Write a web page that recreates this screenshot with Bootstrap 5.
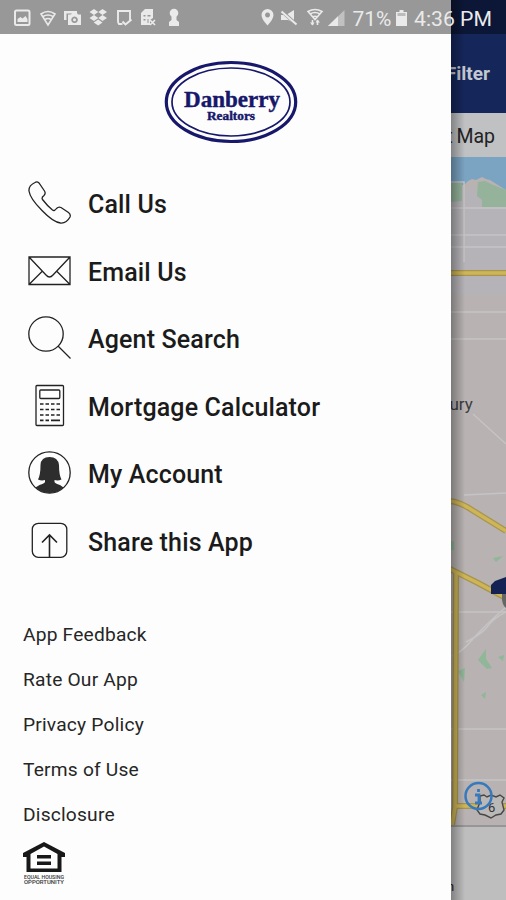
<!DOCTYPE html>
<html lang="en">
<head>
<meta charset="utf-8">
<meta name="viewport" content="width=device-width, initial-scale=1">
<title>Danberry Realtors</title>
<link rel="stylesheet" href="https://cdn.jsdelivr.net/npm/bootstrap@5.3.0/dist/css/bootstrap.min.css">
<style>
body{font-family:Roboto,"Liberation Sans",sans-serif;color:#1b1b1b;background:#fdfdfd}
svg{display:block;flex:none}
.screen{width:506px;height:900px}
.app-head{height:113px;padding:36px 16px 0 0;background:#15265a;color:#c4c8d2;font-size:19px;font-weight:700}
.map-tabs{height:44px;padding:3px 11px 0 0;background:#bfc1c3;color:#222;font-size:19.5px;word-spacing:-1px}
.map-foot{height:75px;background:#bebebe;border-top:2px solid #969696}
.shade{width:14px;left:451px;background:linear-gradient(90deg,rgba(0,0,0,.32),rgba(0,0,0,0))}
.drawer{width:451px;background:#fdfdfd;padding-top:60px}
.logo{margin-left:164px;margin-bottom:26px}
.menu-row{height:67.5px;padding-left:28px;gap:17px;font-size:25px;font-weight:500;letter-spacing:.15px;color:#1b1b1b}
.menu-row span{padding-top:2px}
.menu-row svg{margin-bottom:2px}
.links{padding:38px 0 0 23px}
.links a{height:45px;font-size:19.2px;letter-spacing:.2px;color:#262626}
.status{height:34px;background:rgba(0,0,0,.4)}
.stroke-art{fill:none;stroke:#222;stroke-width:1.3}
</style>
<script src="https://cdn.jsdelivr.net/npm/bootstrap@5.3.0/dist/js/bootstrap.bundle.min.js"></script>
</head>
<body>
<div class="screen position-relative overflow-hidden">
  <main class="d-flex flex-column h-100">
    <header class="app-head d-flex align-items-center justify-content-end"><span>Filter</span></header>
    <div class="map-tabs d-flex align-items-center justify-content-end">List Map</div>
    <svg class="ms-auto" width="56" height="668" viewBox="450 157 56 668">
      <path fill="#b8b2b2" d="M450 157h56v668h-56z"/>
      <path fill="#b5b3b7" d="M450 190h56v105h-56z"/>
      <path fill="#7ba4c3" d="M450 157h56v33l-8-5-8-5-4-1-4-2-6 3-4-1-4 2-4 4h-14z"/>
      <path fill="#95b39a" d="M450 183h12v18l-12 1zM478 182l7-1 8 4 13 5v17h-24v-7l-5-4z"/>
      <g fill="none" stroke="#c5c3c5" stroke-width="1.500">
        <path d="M450 182h14v80M450 208h56M450 235h56M450 247h56M450 312h56M450 339h56M473 414l33 30M464 495l42-2M450 612h56M450 729h56M450 780h56"/>
        <path stroke-width="1.500" d="M452 656q10-4 20-16t34-33M466 642q16-8 22-16t18-14"/>
      </g>
      <path fill="#8fb798" d="M478 660l8-11v10l6 9-5 1zM498 657l6-2-1 6zM458 671l7-3-1 14zM481 695l5-3-1 7zM493 558l10-2-7 6zM450 541h4v9h-4z"/>
      <g fill="none" stroke="#a8954e" stroke-width="6"><path d="M450 273h56M450 501q10 1 22 9l34 21M450 569l28 14 28 15M456 572l-1 235-3 18M454 806h52"/></g>
      <g fill="none" stroke="#cdb558" stroke-width="3.500"><path d="M450 273h56M450 501q10 1 22 9l34 21M450 569l28 14 28 15M456 572l-1 235-3 18M454 806h52"/></g>
      <path fill="#142354" d="M491 585l4-4 11-4v17h-15z"/>
      <path fill="#666" d="M502 594h4v14q-3-2-4-8z"/>
      <text x="449.500" y="410" font-size="17" fill="#3c3e42">ury</text>
      <path d="M480 796l4-1 3 2 4-2 5 2 4-2 4 3-2 4 2 8-3 4-5 1-5 3-6-3-5-1-3-4 3-8z" fill="#bbb9b7" stroke="#474747" stroke-width="1.400"/>
      <text x="488" y="812" font-size="13" fill="#333">6</text>
      <circle cx="478.500" cy="796" r="13" fill="none" stroke="#3679bd" stroke-width="2.500"/>
      <path d="M478.500 789v3M475 795h4v8M475 803h7" fill="none" stroke="#3679bd" stroke-width="2.800"/>
    </svg>
    <footer class="map-foot flex-shrink-0"><svg class="ms-auto" width="60" height="73" viewBox="446 827 60 73"><text x="447" y="891" font-size="13" fill="#222">n</text></svg></footer>
  </main>

  <div class="shade position-absolute top-0 h-100"></div>

  <aside class="drawer position-absolute top-0 start-0 h-100">
    <svg class="logo" width="134" height="84" viewBox="0 0 134 84">
      <g fill="none" stroke="#17176b"><ellipse cx="67" cy="42" rx="64.700" ry="39.500" stroke-width="3.200"/><ellipse cx="67" cy="42" rx="59" ry="34" stroke-width="1.700"/></g>
      <g fill="#17176b" stroke="#17176b" stroke-width=".4" font-family="Liberation Serif,serif" font-weight="700"><text x="20" y="47" font-size="23" textLength="96" lengthAdjust="spacingAndGlyphs">Danberry</text><text x="43" y="60" font-size="11.500" textLength="48" lengthAdjust="spacingAndGlyphs">Realtors</text></g>
    </svg>
    <nav class="d-flex flex-column">
      <a class="menu-row d-flex align-items-center text-decoration-none" href="#">
        <svg class="stroke-art" width="43" height="43" viewBox="0 0 43 43"><path d="M7 1.500Q9 .2 11 2L16.500 10Q18 12.500 16 14.500Q13.200 16.500 14.500 18.500Q19 24.500 24.500 29Q26.500 30.500 28.500 27.500Q30.500 25.500 33 26.500L40.500 31.500Q43 33.500 42 36Q38.500 42.500 32.500 42Q25 41 14 29.500Q2 17.500 1 10Q.5 4.500 7 1.500Z"/></svg>
        <span>Call Us</span></a>
      <a class="menu-row d-flex align-items-center text-decoration-none" href="#">
        <svg class="stroke-art" width="43" height="43" viewBox="0 0 43 43"><path d="M1 8h41v27.500H1zM1 8l17 18q3.500 4 7 0L42 8M1 35.500L14.500 22M42 35.500L28.500 22"/></svg>
        <span>Email Us</span></a>
      <a class="menu-row d-flex align-items-center text-decoration-none" href="#">
        <svg class="stroke-art" width="43" height="43" viewBox="0 0 43 43"><circle cx="18" cy="18" r="17.200"/><path d="M30 30l12.500 12.500"/></svg>
        <span>Agent Search</span></a>
      <a class="menu-row d-flex align-items-center text-decoration-none" href="#">
        <svg class="stroke-art" width="43" height="43" viewBox="0 0 43 43"><rect x="8" y="1.500" width="27.500" height="40" rx="1"/><rect x="11.800" y="6" width="20" height="8.500" rx="1"/><path d="M12 20h20M12 25.500h20M12 31h20" stroke-width="1.700" stroke-dasharray="3.500 2"/><path d="M12 36.300h3.500M17.500 36.300h3.500M23 36.300h9" stroke-width="1.700"/></svg>
        <span>Mortgage Calculator</span></a>
      <a class="menu-row d-flex align-items-center text-decoration-none" href="#">
        <svg class="stroke-art" width="43" height="43" viewBox="0 0 43 43"><circle cx="21.500" cy="21.500" r="20.700"/><path fill="#2d2d2d" stroke="none" d="M12.500 14Q13 6 21.500 6T31 14Q31 24 33.500 28.500Q30 30 26.500 29V31Q27 32.500 32 34L35.500 36.500Q29.500 42 21.500 42T7.500 36.500L11.500 34Q16.500 32.500 17 31V29Q13.500 30 10 28.500Q12.500 24 12.500 14Z"/></svg>
        <span>My Account</span></a>
      <a class="menu-row d-flex align-items-center text-decoration-none" href="#">
        <svg class="stroke-art" width="43" height="43" viewBox="0 0 43 43"><rect x="4.300" y="4.300" width="34.500" height="34" rx="6"/><path stroke-width="1.600" d="M21.500 38V16M14 23.500l7.500-7.500 7.500 7.500"/></svg>
        <span>Share this App</span></a>
    </nav>
    <div class="links d-flex flex-column">
      <a class="d-flex align-items-center text-decoration-none" href="#">App Feedback</a>
      <a class="d-flex align-items-center text-decoration-none" href="#">Rate Our App</a>
      <a class="d-flex align-items-center text-decoration-none" href="#">Privacy Policy</a>
      <a class="d-flex align-items-center text-decoration-none" href="#">Terms of Use</a>
      <a class="d-flex align-items-center text-decoration-none" href="#">Disclosure</a>
      <svg class="mt-1" width="42" height="44" viewBox="0 0 42 44"><path fill="#181818" fill-rule="evenodd" d="M21 0L42 11v4h-3.500v15h-35V15H0v-4zM21 4.500L7.500 12v14.500h27V12z"/><path fill="#181818" d="M14 13h14v3.500H14zM14 19.500h14V23H14z"/><g fill="#333" font-size="4.800" font-weight="500"><text x="1" y="36.500" textLength="40" lengthAdjust="spacingAndGlyphs">EQUAL HOUSING</text><text x="1" y="42" textLength="40" lengthAdjust="spacingAndGlyphs">OPPORTUNITY</text></g></svg>
    </div>
  </aside>

  <div class="status position-absolute top-0 start-0 w-100">
    <svg width="506" height="34" viewBox="0 0 506 34" fill="#eaeaea">
      <rect x="15" y="10.500" width="14.500" height="14.500" rx="1.500" fill="none" stroke="#eaeaea" stroke-width="2"/><path d="M17.500 22v-3l3-2 2 1.500 3-2.500 2 3v3z"/>
      <g fill="none" stroke="#eaeaea" stroke-width="1.600"><path d="M41 14q7-5 14 0l-7 11zM43 16.500q5-3 10 0M45 19.500q3-2 6 0"/></g>
      <path d="M64 11h13v2.500H66.500V20H64z"/><path fill-rule="evenodd" d="M68 14.500h3l1-1.500h5l1 1.500h3V25H68zM74.500 16.500a3.300 3.300 0 1 0 .1 0z"/><circle cx="74.500" cy="19.800" r="1.500"/>
      <path d="M94 9l4.300 3-4.300 3-4.500-3zM102.500 9l4.500 3-4.500 3-4.200-3zM94 15l4.300 3-4.300 3-4.500-3zM102.500 15l4.500 3-4.500 3-4.200-3zM98.200 19.500l4.300 3-4.300 3-4.500-3z"/>
      <path d="M122.500 24h-3.500q-1-1-1-3V11h12v9" fill="none" stroke="#eaeaea" stroke-width="1.900"/><path d="M122.500 21.500l3 3 6-5" fill="none" stroke="#eaeaea" stroke-width="2"/>
      <path fill-rule="evenodd" d="M145 9h8v9l-3 2v5h-9V13zM143.500 15v1.500h2V15zm4 0v1.500h3V15zm-4 4v1.500h2V19zm4 0v4h1v-4z"/><path d="M150 20l5 5m0-5l-5 5" stroke="#eaeaea" stroke-width="1.700"/>
      <circle cx="174" cy="13" r="4.300"/><path d="M171.500 16h5v4l2.500 2v4h-10v-4l2.500-2z"/>
      <path fill-rule="evenodd" d="M267.500 9a6 6 0 0 1 6 6q0 4-6 10.500-6-6.500-6-10.500a6 6 0 0 1 6-6zm0 3.500a2.500 2.500 0 1 0 .1 0z"/>
      <path d="M281 15h5l8-5v13l-6-3h-7z"/><path d="M282 11.500l14.500 13" stroke="#999" stroke-width="3.500"/><path d="M281.500 11.500l15 13" stroke="#eaeaea" stroke-width="2"/>
      <g fill="none" stroke="#eaeaea" stroke-width="1.600"><path d="M308 11.500q7-4 14 0l-7 8zM310 14q5-3 10 0M312.500 17q2.500-1.500 5 0M312.500 20v5M317.500 20v5"/></g><path d="M310 22.500l2.500 3 2-3zM315.500 22.500l2-3 2.500 3z"/>
      <path d="M328 26h16.500V10z" opacity=".5"/><path d="M328 26h10v-9.700z"/>
      <text x="352.500" y="25.500" font-size="20" textLength="39" lengthAdjust="spacingAndGlyphs">71%</text>
      <path d="M396 12h3.500v-2h4v2h3.500v14h-11z"/><path fill="#bbb" d="M397.500 13h8v3h-8z"/>
      <text x="414" y="25.500" font-size="20.500" textLength="78" lengthAdjust="spacingAndGlyphs">4:36 PM</text>
    </svg>
  </div>
</div>
</body>
</html>
